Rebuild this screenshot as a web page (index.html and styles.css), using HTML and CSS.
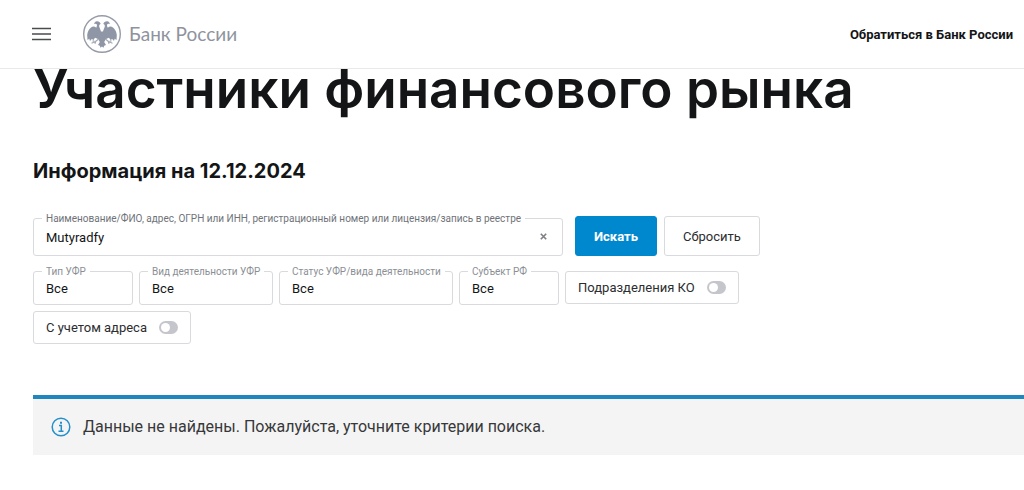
FILE: index.html
```html
<!DOCTYPE html>
<html lang="ru">
<head>
<meta charset="utf-8">
<meta name="viewport" content="width=device-width, initial-scale=1">
<title>Участники финансового рынка | Банк России</title>
<link rel="stylesheet" href="styles.css">
</head>
<body>
<header class="header">
  <button class="menu-button" type="button" aria-label="Меню">
    <svg width="19" height="14" viewBox="0 0 19 14" aria-hidden="true"><path d="M0 1.5h19M0 7h19M0 12.5h19" stroke="#4a4b4e" stroke-width="1.7"/></svg>
  </button>
  <a class="logo" href="#">
    <svg width="40" height="40" viewBox="0 0 40 40" aria-hidden="true">
      <circle cx="20" cy="20" r="18.3" fill="none" stroke="#969ba8" stroke-width="1.4"/>
      <g fill="#8f96a5">
        <path d="M19 17.500C18.600 15.500 17.600 14.200 17.200 12.400C17 11 17.800 10.200 18.700 10C18.100 8 16.500 7 14.700 7.200C13.300 7.400 12.400 8.400 12 10.200C13 9.600 14.100 9.600 14.700 10.300C15.300 11.200 14.800 12.700 14.200 13.700C12.600 12 10.800 12 9 13.500C6.800 15.300 5.500 18 5.200 21L5.500 26L7.300 24.800L8 27L9.800 25L11.500 26L13 23.800L16 25L17.800 28L16 31L17.800 31.800L18.500 33.800L20 32.600L21.500 33.800L22.200 31.800L24 31L22.200 28L24 25L27 23.800L28.500 26L30.200 25L32 27L32.700 24.800L34.500 26L34.800 21C34.500 18 33.200 15.300 31 13.500C29.200 12 27.400 12 25.800 13.700C25.200 12.700 24.700 11.200 25.300 10.300C25.900 9.600 27 9.600 28 10.200C27.600 8.400 26.700 7.400 25.300 7.200C23.500 7 21.900 8 21.300 10C22.200 10.200 23 11 22.800 12.400C22.400 14.200 21.400 15.500 21 17.500Z"/>
      </g>
      <path d="M9.500 29.300l4-1.800 2.800-2.300M30.500 29.300l-4-1.800-2.800-2.300M12.200 26.800l-1.800.2M27.800 26.800l1.800.2M13.700 27.600l-.8 2.200M26.300 27.600l.8 2.200" fill="none" stroke="#a3a8b4" stroke-width="1.200"/>
    </svg>
    <span>Банк России</span>
  </a>
  <a class="contact" href="#">Обратиться в Банк России</a>
</header>
<main class="content">
  <h1 class="title">Участники финансового рынка</h1>
  <h2 class="subtitle">Информация на 12.12.2024</h2>
  <form class="filters">
    <div class="search-row">
      <div class="field field-search">
        <label class="field-label" for="query">Наименование/ФИО, адрес, ОГРН или ИНН, регистрационный номер или лицензия/запись в реестре</label>
        <input class="field-control" id="query" type="text" value="Mutyradfy">
        <button class="clear" type="button" aria-label="Очистить">
          <svg width="7" height="7" viewBox="0 0 7 7" aria-hidden="true"><path d="M.8.8l5.400 5.400M6.200.8L.8 6.200" stroke="#7c7f83" stroke-width="1.6"/></svg>
        </button>
      </div>
      <button class="button button-primary" type="submit">Искать</button>
      <button class="button" type="reset">Сбросить</button>
    </div>
    <div class="filter-row">
      <div class="field field-small">
        <label class="field-label" for="type">Тип УФР</label>
        <select class="field-control" id="type"><option>Все</option></select>
      </div>
      <div class="field field-medium">
        <label class="field-label" for="activity">Вид деятельности УФР</label>
        <select class="field-control" id="activity"><option>Все</option></select>
      </div>
      <div class="field field-large">
        <label class="field-label" for="status">Статус УФР/вида деятельности</label>
        <select class="field-control" id="status"><option>Все</option></select>
      </div>
      <div class="field field-small">
        <label class="field-label" for="region">Субъект РФ</label>
        <select class="field-control" id="region"><option>Все</option></select>
      </div>
      <label class="toggle">Подразделения КО <input class="switch" type="checkbox"></label>
      <label class="toggle">С учетом адреса <input class="switch" type="checkbox"></label>
    </div>
  </form>
  <div class="notice" role="status">
    <svg width="20" height="20" viewBox="0 0 20 20" fill="none" stroke="#2390ca" aria-hidden="true"><circle cx="10" cy="10" r="8.800" stroke-width="1.500"/><path d="M8 8.600h2.300v5.200M7.500 14.300h5" stroke-width="1.500"/><path d="M9 5.800h2" stroke-width="2"/></svg>
    <p class="notice-text">Данные не найдены. Пожалуйста, уточните критерии поиска.</p>
  </div>
</main>
</body>
</html>
```
FILE: styles.css
```css
* { box-sizing: border-box; }
body {
  margin: 0;
  background: #fff;
  color: #141517;
  font-family: Roboto, "Liberation Sans", sans-serif;
  font-size: 13px;
}
button, input, select { font: inherit; color: inherit; }
button { cursor: pointer; }
a { color: inherit; text-decoration: none; }

.header {
  display: flex;
  align-items: center;
  height: 69px;
  padding: 0 11px 0 32px;
  border-bottom: 1px solid #e9e9ea;
}
.menu-button {
  display: flex;
  padding: 0;
  border: 0;
  background: none;
}
.logo {
  display: flex;
  align-items: center;
  gap: 7px;
  margin-left: 31px;
  color: #8f939e;
  font-family: Lato, sans-serif;
  font-size: 19px;
  line-height: 20px;
}
.contact {
  margin-left: auto;
  font-size: 13px;
  font-weight: 700;
}

.content { padding-left: 33px; }
.title {
  margin: 0;
  font-family: Inter, sans-serif;
  font-size: 53px;
  font-weight: 600;
  line-height: 40px;
}
.subtitle {
  margin: 48px 0 0;
  font-family: Inter, sans-serif;
  font-size: 20px;
  font-weight: 700;
  line-height: 28px;
}

.filters { margin-top: 31px; }
.search-row {
  display: flex;
  align-items: flex-end;
  gap: 7px;
}
.filter-row {
  display: flex;
  flex-wrap: wrap;
  gap: 6px;
  max-width: 730px;
  margin-top: 15px;
}
.field { position: relative; }
.field-search {
  flex: 0 1 530px;
  margin-right: 5px;
}
.field-small { flex: 0 0 100px; }
.field-medium { flex: 0 0 134px; }
.field-large { flex: 0 0 174px; }
.field-label {
  position: absolute;
  top: -5px;
  left: 9px;
  padding: 0 4px;
  background: #fff;
  color: #8b8f95;
  font-size: 10px;
  line-height: 11px;
  white-space: nowrap;
}
.field-search .field-label { color: #6f7378; }
.field-control {
  display: block;
  width: 100%;
  height: 34px;
  padding: 0 12px;
  border: 1px solid #d8dade;
  border-radius: 3px;
  background: #fff;
  appearance: none;
}
.field-search .field-control {
  height: 38px;
  padding-right: 36px;
}
.clear {
  position: absolute;
  top: 11px;
  right: 12px;
  display: flex;
  padding: 4px;
  border: 0;
  background: none;
}
.button {
  height: 40px;
  padding: 0 18px;
  border: 1px solid #d8dade;
  border-radius: 3px;
  background: #fff;
  color: #2c2d2f;
}
.button-primary {
  border-color: #0088cf;
  background: #0088cf;
  color: #fff;
  font-weight: 700;
}
.toggle {
  display: flex;
  align-items: center;
  gap: 12px;
  height: 33px;
  padding: 0 12px;
  border: 1px solid #d8dade;
  border-radius: 3px;
  color: #2c2d2f;
}
.switch {
  display: flex;
  align-items: center;
  width: 19px;
  height: 13px;
  margin: 0;
  padding: 2px;
  border-radius: 7px;
  background: #c5c6cc;
  appearance: none;
}
.switch::before {
  content: "";
  width: 9px;
  height: 9px;
  border-radius: 50%;
  background: #fff;
}
.switch:checked { justify-content: flex-end; background: #0088cf; }

.notice {
  display: flex;
  align-items: center;
  gap: 12px;
  margin-top: 51px;
  padding: 16px 18px;
  border-top: 4px solid #1f87bd;
  background: #f4f4f4;
  color: #37383a;
}
.notice-text {
  margin: 0;
  font-size: 16px;
  line-height: 24px;
}
```
